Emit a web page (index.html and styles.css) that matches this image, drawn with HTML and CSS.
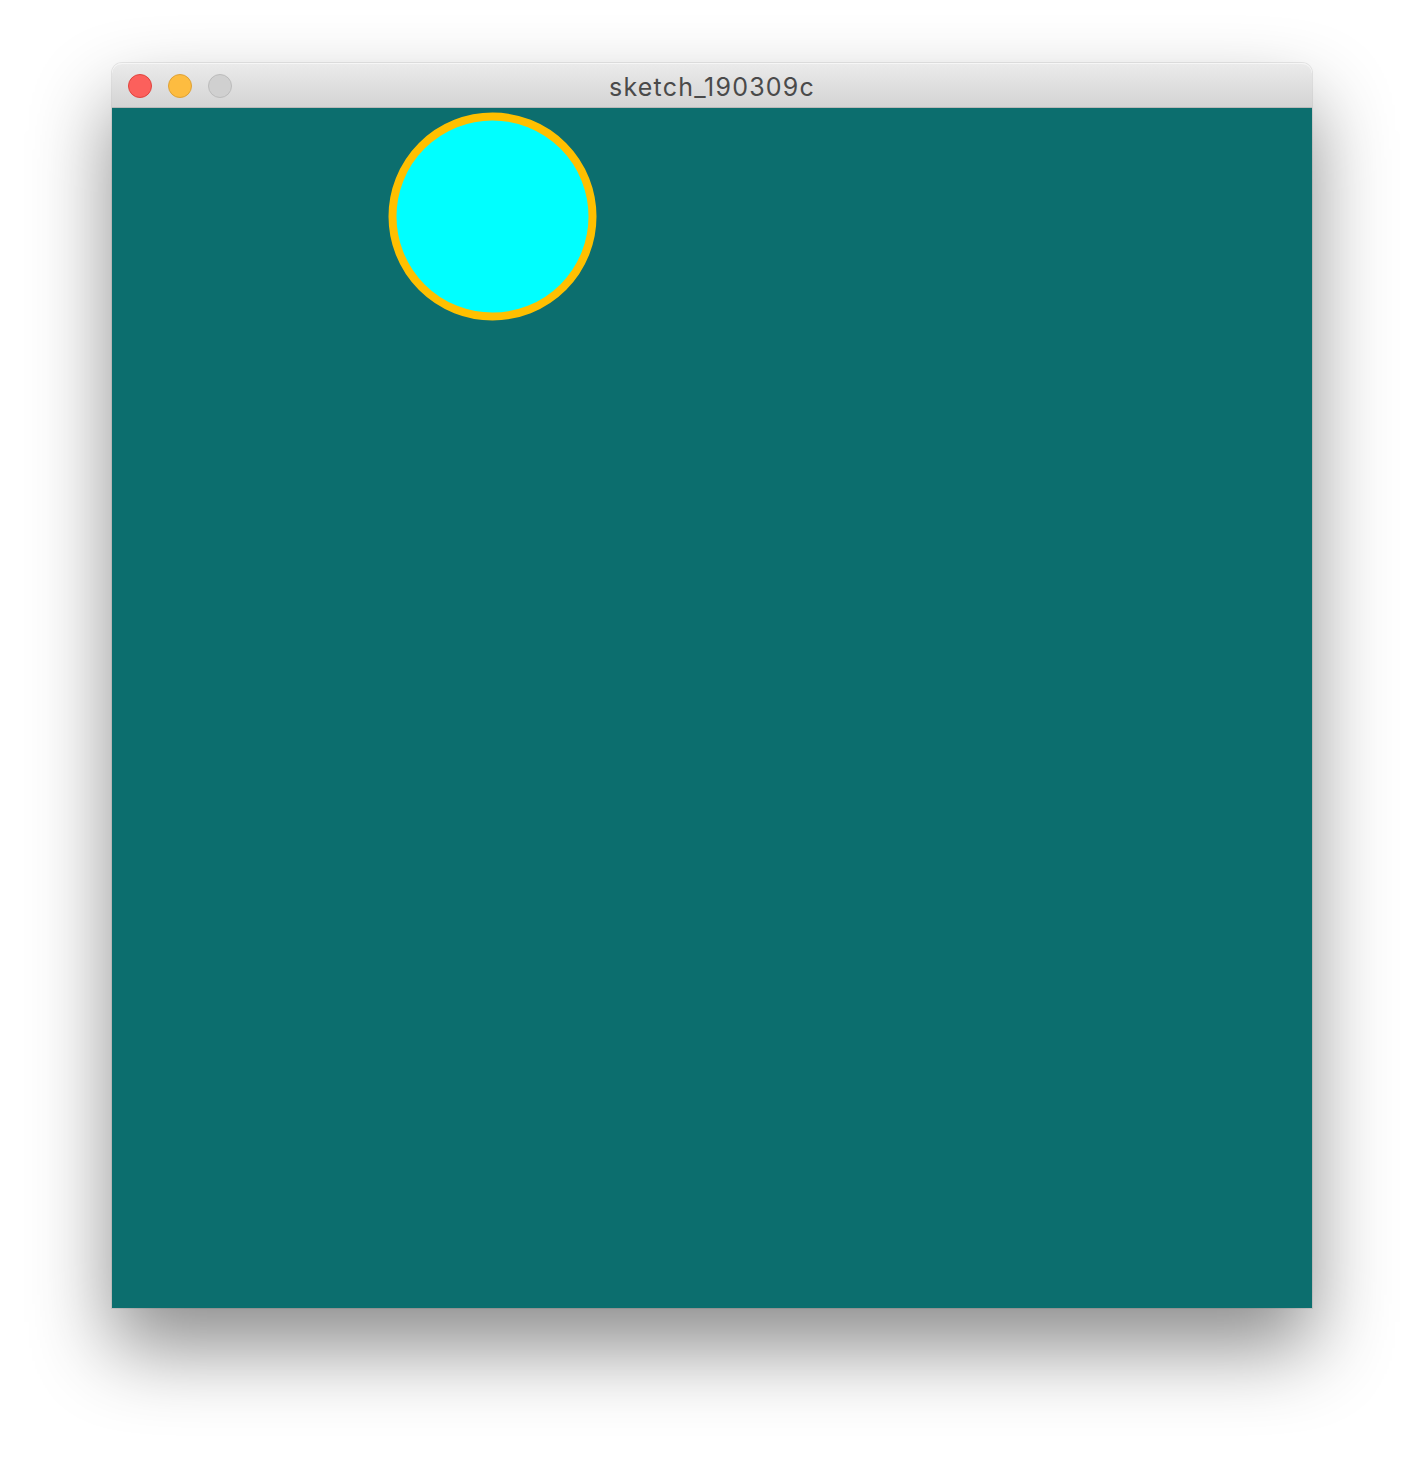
FILE: index.html
```html
<!DOCTYPE html>
<html>
<head>
<meta charset="utf-8">
<link rel="stylesheet" href="styles.css">
</head>
<body>
<div class="window">
  <div class="titlebar">
    <div class="lights">
      <span class="light close"></span>
      <span class="light min"></span>
      <span class="light zoom"></span>
    </div>
    <div class="title">sketch_190309c</div>
  </div>
  <svg class="canvas" width="1200" height="1200" viewBox="0 0 1200 1200">
    <rect x="0" y="0" width="1200" height="1200" fill="#0c6e6e"/>
    <circle cx="380.5" cy="108.5" r="100" fill="#00ffff" stroke="#ffc000" stroke-width="8"/>
  </svg>
</div>
</body>
</html>
```
FILE: styles.css
```css
html, body {
  margin: 0;
  padding: 0;
  background: #ffffff;
}
body {
  width: 1424px;
  height: 1468px;
  overflow: hidden;
  padding-top: 63px;
  padding-left: 112px;
  box-sizing: border-box;
}
.window {
  width: 1200px;
  display: flex;
  flex-direction: column;
  border-radius: 10px 10px 0 0;
  box-shadow: 0 40px 80px rgba(0, 0, 0, 0.45), 0 0 0 1px rgba(0, 0, 0, 0.08);
}
.titlebar {
  position: relative;
  height: 44px;
  border-radius: 10px 10px 0 0;
  background: linear-gradient(#ebebeb, #d4d4d4);
  border-bottom: 1px solid #b9b9b9;
  box-shadow: inset 0 1px 0 #f6f6f6;
  display: flex;
  align-items: center;
  justify-content: center;
}
.lights {
  position: absolute;
  left: 16px;
  top: 11px;
  display: flex;
  gap: 16px;
}
.light {
  width: 22px;
  height: 22px;
  border-radius: 50%;
  display: block;
}
.close { background: #fc605c; border: 1px solid #e0443e; }
.min { background: #fdbc40; border: 1px solid #dea236; }
.zoom { background: #d0d0d0; border: 1px solid #bcbcbc; }
.title {
  font-family: Inter, "Noto Sans", "Liberation Sans", sans-serif;
  font-size: 25px;
  letter-spacing: 1.2px;
  color: #4a4a4a;
  line-height: 44px;
  padding-top: 3px;
}
.canvas {
  display: block;
}
```
